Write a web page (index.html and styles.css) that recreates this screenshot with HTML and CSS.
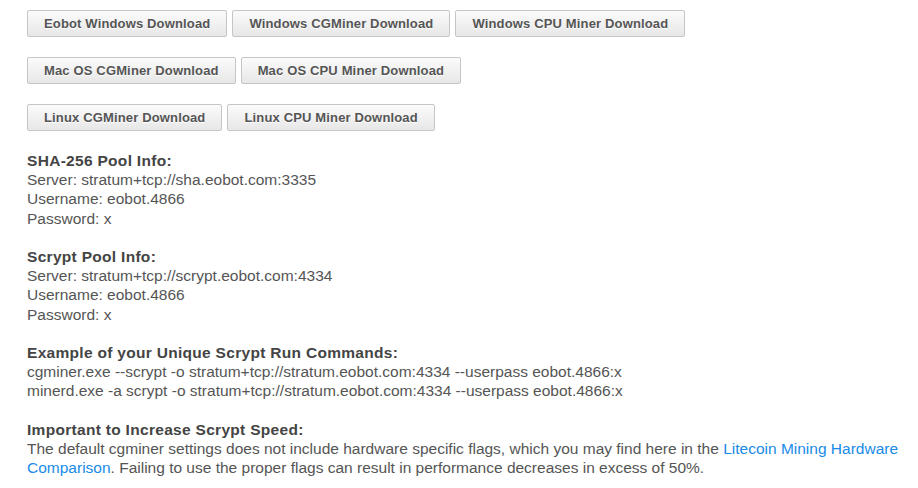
FILE: index.html
```html
<!DOCTYPE html>
<html>
<head>
<meta charset="utf-8">
<link rel="stylesheet" href="styles.css">
</head>
<body>
<div class="page">
  <div class="btn-row">
    <a class="btn">Eobot Windows Download</a>
    <a class="btn">Windows CGMiner Download</a>
    <a class="btn">Windows CPU Miner Download</a>
  </div>
  <div class="btn-row">
    <a class="btn">Mac OS CGMiner Download</a>
    <a class="btn">Mac OS CPU Miner Download</a>
  </div>
  <div class="btn-row">
    <a class="btn">Linux CGMiner Download</a>
    <a class="btn">Linux CPU Miner Download</a>
  </div>
  <div class="info">
    <b>SHA-256 Pool Info:</b><br>
    Server: stratum+tcp://sha.eobot.com:3335<br>
    Username: eobot.4866<br>
    Password: x<br>
    <br>
    <b>Scrypt Pool Info:</b><br>
    Server: stratum+tcp://scrypt.eobot.com:4334<br>
    Username: eobot.4866<br>
    Password: x<br>
    <br>
    <b>Example of your Unique Scrypt Run Commands:</b><br>
    cgminer.exe --scrypt -o stratum+tcp://stratum.eobot.com:4334 --userpass eobot.4866:x<br>
    minerd.exe -a scrypt -o stratum+tcp://stratum.eobot.com:4334 --userpass eobot.4866:x<br>
    <br>
    <b>Important to Increase Scrypt Speed:</b><br>
    The default cgminer settings does not include hardware specific flags, which you may find here in the <a class="link">Litecoin Mining Hardware Comparison</a>. Failing to use the proper flags can result in performance decreases in excess of 50%.
  </div>
</div>
</body>
</html>
```
FILE: styles.css
```css
html, body {
  margin: 0;
  padding: 0;
  background: #fff;
}
.page {
  padding: 10px 18px 0 27px;
  font-family: "Liberation Sans", Arial, sans-serif;
}
.btn-row {
  display: flex;
  gap: 5px;
  margin-bottom: 20px;
}
.btn {
  display: inline-block;
  height: 25px;
  line-height: 25px;
  padding: 0 16px;
  border: 1px solid #c6c6c6;
  border-radius: 2px;
  background: linear-gradient(#fbfbfb, #e7e7e7);
  color: #555;
  font-size: 13px;
  font-weight: bold;
  letter-spacing: 0.15px;
  text-shadow: 0 1px 0 #fff;
  white-space: nowrap;
}
.info {
  margin-top: 20px;
  font-size: 15.5px;
  line-height: 19.2px;
  color: #555;
}
.info b {
  color: #444;
  letter-spacing: 0.3px;
}
.link {
  color: #1a8be8;
}
```
